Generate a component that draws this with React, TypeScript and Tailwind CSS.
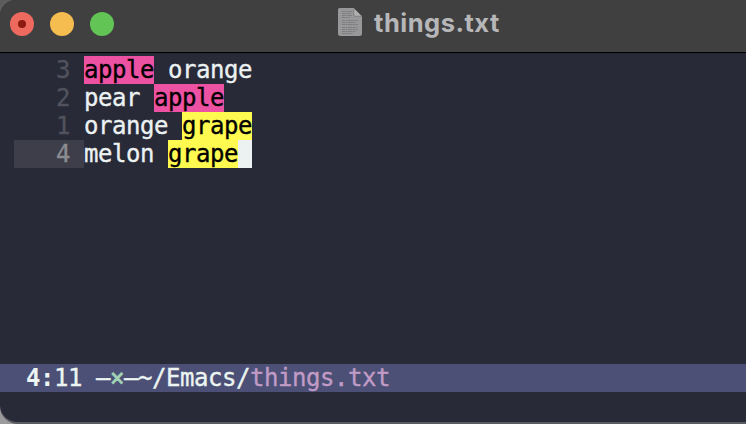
import type { ReactNode } from "react";

type RowProps = { n: number; current?: boolean; children: ReactNode };

function Row({ n, current = false, children }: RowProps) {
  return (
    <div className="flex h-7 whitespace-pre pl-3.5">
      <span
        className={
          current
            ? "h-7 w-[70px] bg-[#3d3e4a] pr-3.5 text-right text-[#8b8c91]"
            : "h-7 w-[70px] pr-3.5 text-right text-[#51525e]"
        }
      >
        {n}
      </span>
      {children}
    </div>
  );
}

const Pink = ({ children }: { children: ReactNode }) => (
  <span className="h-7 bg-[#ed51a2] text-black">{children}</span>
);

const Yellow = ({ children }: { children: ReactNode }) => (
  <span className="h-7 bg-[#fffa50] text-black">{children}</span>
);

function FileIcon() {
  return (
    <svg className="h-[30px] w-[26px]" viewBox="0 0 26 30">
      <path d="M2.5 1H16.5L25 9.5V26.5Q25 29 22.5 29H3.5Q1 29 1 26.5V2.5Q1 1 2.5 1Z" fill="#98989a" />
      <path d="M16.5 1V8Q16.5 9.5 18 9.5H25Z" fill="#b0b0b1" />
      <path d="M16.7 2V8Q16.7 9.3 18 9.3H24.5" fill="none" stroke="#707072" strokeWidth=".7" />
      <path
        d="M5 4.5h10M5 6.5h9M5 8.5h10M5 10.5h8M5 13.5h16M5 15.5h14M5 17.5h16M5 20.5h15M5 22.5h16M5 24.5h14M5 26.5h11"
        stroke="#7b7b7d"
        strokeWidth=".9"
        strokeDasharray="3 .5 2 .4 4 .5"
      />
    </svg>
  );
}

export default function App() {
  return (
    <div className="h-[424px] w-[746px] overflow-hidden bg-linear-to-b from-[#5c5c5d] to-[#9b9b9d]">
      <div className="flex h-full w-[760px] flex-col overflow-hidden rounded-tl-[16px] rounded-bl-[18px] border-b-2 border-[#5b5b63] bg-[#282a38]">
        <header className="flex h-[53px] shrink-0 border-b border-black bg-[#404041] pl-2.5">
          <div className="flex gap-4 pt-3">
            <span className="flex size-6 items-center justify-center rounded-full bg-[#ee6a5f]">
              <span className="size-2 rounded-full bg-[#8c1a10]" />
            </span>
            <span className="size-6 rounded-full bg-[#f5bd4f]" />
            <span className="size-6 rounded-full bg-[#61c454]" />
          </div>
          <div className="flex pt-[7px] pl-[223px]">
            <FileIcon />
            <h1 className="pl-[11px] font-[Inter] text-[25.5px] leading-8 font-bold tracking-[0.5px] text-[#b7b7b9]">
              things.txt
            </h1>
          </div>
        </header>
        <main className="h-[311px] shrink-0 border-t border-[#222431] pt-0.5 font-['DejaVu_Sans_Mono',monospace] text-[24px] leading-7 tracking-[-0.449px] text-[#ecf1f2] [-webkit-text-stroke:0.35px_currentColor]">
          <Row n={3}>
            <Pink>apple</Pink>
            <span> orange</span>
          </Row>
          <Row n={2}>
            <span>pear </span>
            <Pink>apple</Pink>
          </Row>
          <Row n={1}>
            <span>orange </span>
            <Yellow>grape</Yellow>
          </Row>
          <Row n={4} current>
            <span>melon </span>
            <Yellow>grape</Yellow>
            <span className="h-7 w-3.5 bg-[#ecf1f2]" />
          </Row>
        </main>
        <footer className="h-7 shrink-0 whitespace-pre bg-[#4c5076] pl-[26px] font-['DejaVu_Sans_Mono',monospace] text-[24px] leading-7 tracking-[-0.449px] text-[#ecf5f2] [-webkit-text-stroke:0.35px_currentColor]">
          <span className="font-bold [-webkit-text-stroke:0]">4:</span>11 –<span className="text-[#a2d3b7] [-webkit-text-stroke:0.7px_currentColor]">×</span>–~/Emacs/
          <span className="text-[#c19bc6]">things.txt</span>
        </footer>
      </div>
    </div>
  );
}
